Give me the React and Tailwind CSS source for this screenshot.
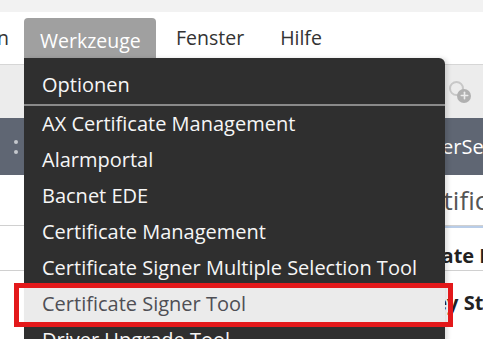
import { Plus } from 'lucide-react';

const items = [
  'AX Certificate Management',
  'Alarmportal',
  'Bacnet EDE',
  'Certificate Management',
  'Certificate Signer Multiple Selection Tool',
  'Certificate Signer Tool',
  'Driver Upgrade Tool',
];

export default function App() {
  return (
    <div className="relative w-[483px] h-[339px] overflow-hidden bg-white font-['Open_Sans',sans-serif] text-[20px]">
      {/* page behind the menu */}
      <div className="h-[12px] bg-[#f2f2f2]" />
      <div className="flex h-[52px] items-end bg-white text-[#333] text-[19.5px]">
        <span className="ml-[-111px] w-[120px] shrink-0 pb-[12px] text-right">Lesezeichen</span>
        <div className="ml-[15px] flex h-[46px] w-[132px] shrink-0 items-center rounded-t-[4px] bg-[#a0a0a0] pl-[16px] text-white">
          Werkzeuge
        </div>
        <span className="ml-[20px] pb-[12px]">Fenster</span>
        <span className="ml-[36px] pb-[12px]">Hilfe</span>
      </div>
      <div className="flex h-[54px] items-center justify-end border-t border-[#d6d6d6] bg-[#ececec] pr-[12px]">
        <div className="relative h-[22px] w-[22px]">
          <div className="absolute left-0 top-0 h-[15px] w-[15px] rounded-full border-2 border-[#c8c8c8]" />
          <div className="absolute bottom-0 right-0 flex h-[14px] w-[14px] items-center justify-center rounded-full bg-[#b0b0b0]">
            <Plus size={11} strokeWidth={3.5} color="#ececec" />
          </div>
        </div>
      </div>
      <div className="flex h-[57px] items-center bg-[#5f6673] pl-[14px] text-white">
        <div className="flex flex-col gap-[6px]">
          <span className="h-[4px] w-[4px] rounded-full bg-[#c5c8cd]" />
          <span className="h-[4px] w-[4px] rounded-full bg-[#c5c8cd]" />
        </div>
        <span className="ml-[400px] whitespace-nowrap">UserService</span>
      </div>
      <div className="flex h-[51px] items-center border-b border-[#d0d0d0]">
        <span className="ml-[402px] whitespace-nowrap text-[26px] text-[#555]">Certificate Management</span>
      </div>
      <div className="h-[45px] border-b border-[#d0d0d0] pt-[16px] font-bold leading-[27px] text-[#222]">
        <span className="ml-[369px] whitespace-nowrap">Certificate Info</span>
      </div>
      <div className="h-[48px] pt-[18px] font-bold leading-[27px] text-[#222]">
        <span className="ml-[422px] whitespace-nowrap">Key Store</span>
      </div>
      <div className="absolute left-[445px] top-[226px] h-[2px] w-[40px] bg-[#b9cde8]" />

      {/* dropdown */}
      <div className="absolute left-[24px] top-[58px] w-[421px] rounded-tr-[6px] bg-[#2f2f2f] text-[#f6f6f6] shadow-[3px_0_4px_rgba(0,0,0,0.12)]">
        <div className="flex h-[46px] items-center px-[18px] pt-[8px]">Optionen</div>
        <div className="h-[2px] bg-[#8a8a8a]" />
        {items.map((t) => (
          <div
            key={t}
            className={
              t === 'Certificate Signer Tool'
                ? 'flex h-[36px] items-center whitespace-nowrap bg-[#ebebeb] px-[18px] text-[#4f4f55]'
                : 'flex h-[36px] items-center whitespace-nowrap px-[18px]'
            }
          >
            {t}
          </div>
        ))}
      </div>

      {/* annotation */}
      <div className="absolute left-[14px] top-[283px] h-[44px] w-[439px] border-[5px] border-[#e3191b]" />
    </div>
  );
}
